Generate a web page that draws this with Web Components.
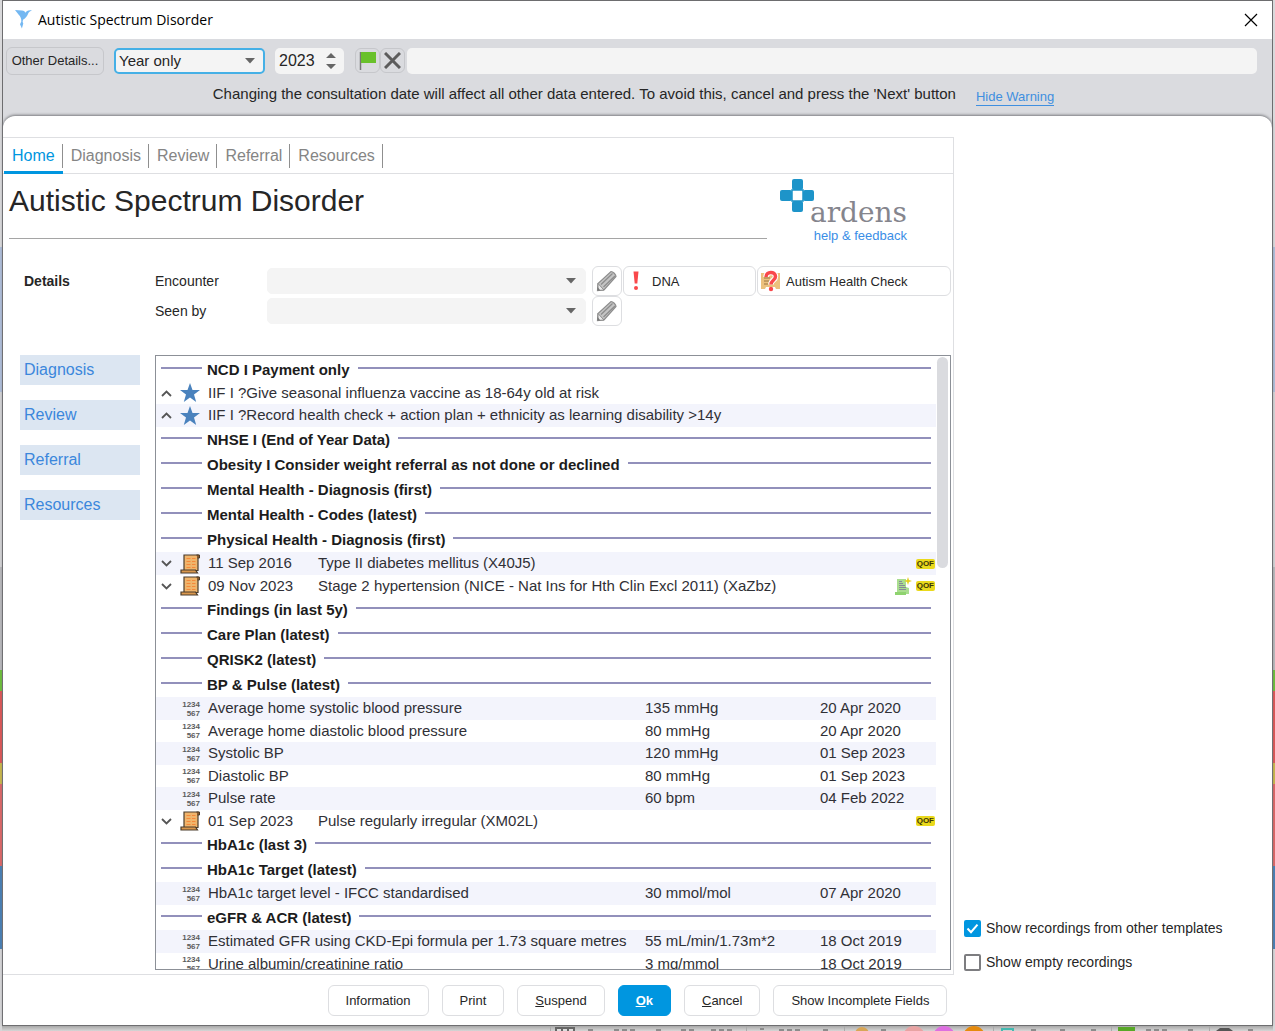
<!DOCTYPE html>
<html lang="en">
<head>
<meta charset="utf-8">
<title>Autistic Spectrum Disorder</title>
<style>
  html, body { margin: 0; height: 100%; }
  body {
    font-family: "Liberation Sans", Arial, sans-serif;
    font-size: 15px;
    color: #262626;
    background: #d0d0d2;
    overflow: hidden;
    --accent: #0096e0;
    --field: #f4f4f4;
    --line: #dedfe2;
  }
</style>
</head>
<body>
<record-app></record-app>
<script>
const define = (name, html, setup) => {
  const tpl = document.createElement('template');
  tpl.innerHTML = '<style>*{box-sizing:border-box}button,input,select{font:inherit;color:inherit;margin:0}svg{display:block;flex:none}</style>' + html;
  customElements.define(name, class extends HTMLElement {
    constructor() {
      super();
      this.attachShadow({ mode: 'open' }).append(tpl.content.cloneNode(true));
    }
    connectedCallback() { if (setup) setup(this, this.shadowRoot); }
  });
};

/* ---------- buttons ---------- */
define('ui-button', `
<style>
  :host { display: block; }
  button {
    width: 100%; height: var(--h, 30px); padding: 0 var(--px, 17px);
    display: flex; align-items: center; justify-content: var(--justify, center); gap: 6px;
    border: 1px solid var(--bd, #dddee1); border-radius: 6px; background: var(--bg, #fff);
    font-size: 13px; white-space: nowrap;
  }
  :host([primary]) button { background: var(--accent); border-color: var(--accent); color: #fff; font-weight: bold; }
</style>
<button type="button"><slot></slot></button>`, (el, root) => {
  if (el.hasAttribute('label')) root.querySelector('button').setAttribute('aria-label', el.getAttribute('label'));
});

/* ---------- drop-down ---------- */
define('ui-select', `
<style>
  :host { display: grid; align-items: center; }
  select, svg { grid-area: 1 / 1; }
  select {
    appearance: none; width: 100%; height: 26px; padding: 0 24px 0 4px;
    border: 1px solid var(--field); border-radius: 5px; background: var(--field); outline: 0;
  }
  :host([focused]) select { border: 2px solid #45b0e6; padding-left: 3px; }
  svg { justify-self: end; margin-right: 10px; pointer-events: none; }
</style>
<select><option></option></select>
<svg width="10" height="6"><path d="M0 0h10L5 5.5z" fill="#666"/></svg>`, (el, root) => {
  const s = root.querySelector('select');
  s.options[0].textContent = el.getAttribute('value') || '';
  s.setAttribute('aria-label', el.getAttribute('label'));
});

/* ---------- tick box ---------- */
define('ui-check', `
<style>
  :host { display: block; font-size: 14px; }
  label { display: flex; align-items: center; gap: 5px; height: 18px; white-space: nowrap; }
  .box { display: grid; }
  input, svg { grid-area: 1 / 1; }
  input { appearance: none; width: 17px; height: 17px; border: 2px solid #7d7d80; border-radius: 2px; background: #fff; }
  input:checked { background: var(--accent); border-color: var(--accent); }
  svg { pointer-events: none; visibility: hidden; }
  input:checked + svg { visibility: visible; }
</style>
<label><span class="box"><input type="checkbox"><svg width="17" height="17"><path d="M3.5 8.5l3.5 3.7L13.5 4.6" fill="none" stroke="#fff" stroke-width="2"/></svg></span><slot></slot></label>`,
(el, root) => { root.querySelector('input').checked = el.hasAttribute('checked'); });

/* ---------- title bar ---------- */
define('title-bar', `
<style>
  :host { display: flex; align-items: center; gap: 5px; height: 38px; padding: 0 14px 2px 10px; background: #fff; color: #000; font: 14px "Open Sans", sans-serif; }
  span { flex: 1; }
  button { border: 0; background: none; padding: 2px 0 0; }
</style>
<svg width="20" height="20" viewBox="0 0 20 20"><path d="M2 1l7 .5c2 .2 3 1.200 3.500 2.200C13.500 2 15 1 19 1.500c-1.800.5-3.500 1.500-4 3.500-.8 2-2.200 4-5 5.800l-.4 2.200.7 1.500-1.400 5-1.900-4.200 1.300-2.800c.2-3-.8-5-2.800-7z" fill="#74b8f2"/></svg>
<span>Autistic Spectrum Disorder</span>
<button type="button" aria-label="Close"><svg width="14" height="14"><path d="M1 1l12 12M13 1L1 13" stroke="#000" stroke-width="1.200"/></svg></button>`);

/* ---------- date tool bar ---------- */
define('date-toolbar', `
<style>
  :host { display: block; height: 77px; background: #dadbdf; }
  .row { display: flex; align-items: center; height: 43px; padding: 0 15px 0 3px; }
  .details { --h: 28px; --px: 4px; --bg: #dadbdf; --bd: #c6c7cb; width: 98px; }
  .sel { width: 151px; margin: 0 10px; }
  .num { display: grid; align-items: center; width: 69px; margin-right: 11px; }
  .num input, .num svg { grid-area: 1 / 1; }
  .num input { appearance: textfield; width: 100%; height: 26px; border: 0; border-radius: 5px; background: var(--field); padding: 0 4px; font-size: 16px; outline: 0; }
  .num input::-webkit-inner-spin-button { appearance: none; }
  .num svg { justify-self: end; margin-right: 8px; pointer-events: none; }
  .ico { --h: 25px; --px: 0; --bg: #dadbdf; --bd: #c6c7cb; width: 25px; }
  .note { flex: 1; height: 26px; border: 0; border-radius: 5px; background: var(--field); padding: 0 6px; min-width: 0; margin-left: 2px; }
  .warn { display: flex; align-items: center; justify-content: center; gap: 20px; height: 22px; padding-right: 8px; white-space: nowrap; }
  a { font-size: 13px; line-height: 16px; color: #3f8fe0; text-decoration: none; border-bottom: 1px solid #3f8fe0; margin-top: 8px; }
</style>
<div class="row">
  <ui-button class="details">Other Details...</ui-button>
  <ui-select class="sel" focused value="Year only" label="Date precision"></ui-select>
  <span class="num"><input type="number" value="2023" aria-label="Year"><svg width="10" height="18"><path d="M0 6h10L5 1zM0 12h10l-5 5z" fill="#666"/></svg></span>
  <ui-button class="ico" label="Flag"><svg width="17" height="20"><path d="M1.500 1v18" stroke="#777" stroke-width="1.500"/><path d="M2 1h15v11H2z" fill="#69c12b"/></svg></ui-button>
  <ui-button class="ico" label="Clear"><svg width="17" height="17"><path d="M1 1l15 15M16 1L1 16" stroke="#5c5c5c" stroke-width="3"/></svg></ui-button>
  <input class="note" type="text" aria-label="Note">
</div>
<div class="warn"><span>Changing the consultation date will affect all other data entered. To avoid this, cancel and press the 'Next' button</span><a href="#">Hide Warning</a></div>`);

/* ---------- tabs ---------- */
define('tab-strip', `
<style>
  :host { display: flex; height: 36px; border-bottom: 1px solid var(--line); padding-left: 1px; }
  nav { display: flex; }
  a { display: flex; align-items: center; font-size: 16px; color: #858585; text-decoration: none; height: 36px; padding-top: 3px; border-bottom: 3px solid transparent; }
  a span { padding: 0 7px 0 8px; line-height: 24px; border-right: 1px solid #8f8f8f; }
  a.on { color: var(--accent); border-color: var(--accent); }
</style>
<nav></nav>`, (el, root) => {
  root.querySelector('nav').innerHTML = ['Home', 'Diagnosis', 'Review', 'Referral', 'Resources']
    .map((t, i) => `<a href="#"${i ? '' : ' class="on"'}><span>${t}</span></a>`).join('');
});

/* ---------- heading and logo ---------- */
define('page-heading', `
<style>
  :host { display: flex; height: 70px; padding: 0 46px 0 6px; gap: 13px; }
  h1 { flex: 1; margin: 0; height: 65px; font-weight: normal; font-size: 30px; line-height: 54px; border-bottom: 1px solid #a5a5a5; white-space: nowrap; }
  .logo { display: grid; width: 127px; grid-template-rows: 54px 16px; justify-items: end; }
  .logo svg, .logo b { grid-area: 1 / 1; }
  .logo svg { justify-self: start; margin-top: 4px; }
  .logo b { font: 28px/30px "DejaVu Serif", serif; color: #85858d; align-self: end; }
  a { font-size: 13px; line-height: 16px; color: #3a8ee6; text-decoration: none; }
</style>
<h1>Autistic Spectrum Disorder</h1>
<div class="logo">
  <svg width="36" height="36"><g fill="#1d94c9"><rect x="12" y="1" width="11" height="11" rx="2"/><rect x="0" y="12" width="12" height="11" rx="2"/><rect x="23" y="12" width="11" height="11" rx="2"/><rect x="12" y="23" width="11" height="11" rx="2"/></g><path d="M12 12h11v11H12z" fill="none" stroke="#1d94c9" stroke-width="1.500"/></svg>
  <b>ardens</b>
  <a href="#">help &amp; feedback</a>
</div>`);

/* ---------- encounter form ---------- */
define('encounter-form', `
<style>
  :host { display: grid; grid-template-columns: 131px 112px 1fr 30px 134px 195px; grid-auto-rows: 30px; align-items: center; padding: 22px 2px 0 21px; font-size: 14px; }
  b { font-size: 14px; }
  .s { margin-right: 6px; }
  .p { --h: 30px; --px: 0; }
  .w { --h: 30px; --px: 3px; --justify: flex-start; margin-left: 1px; }
  .first { grid-column: 2; }
</style>
<b>Details</b>
<span>Encounter</span><ui-select class="s" label="Encounter"></ui-select><ui-button class="p" label="Edit encounter"><pencil-icon></pencil-icon></ui-button>
<ui-button class="w"><svg width="19" height="22"><path d="M6.500 1.500h5l-1.200 12H7.700z" fill="#f9484b"/><circle cx="9" cy="18" r="2" fill="#f9484b"/></svg>DNA</ui-button>
<ui-button class="w"><svg width="19" height="22"><path d="M0 3h4l1 2h9l1-2h4v16h-4l-1-2H5l-1 2H0z" fill="#ecc17d"/><path d="M3 8h6M3 11h6M3 14h4" stroke="#9a7443"/><path d="M5 7c0-6 9.500-6 9.500-.5 0 4-4.500 3.500-4.500 8" fill="none" stroke="#fff" stroke-width="5.500"/><path d="M5 7c0-6 9.500-6 9.500-.5 0 4-4.500 3.500-4.500 8" fill="none" stroke="#f9484b" stroke-width="3.500"/><circle cx="10" cy="19" r="2.200" fill="#f9484b"/></svg>Autism Health Check</ui-button>
<span class="first">Seen by</span><ui-select class="s" label="Seen by"></ui-select><ui-button class="p" label="Edit seen by"><pencil-icon></pencil-icon></ui-button>`);

define('pencil-icon', `
<style>:host { display: block; }</style>
<svg width="22" height="22"><path d="M1.500 20.500l.5-7L15 1.500c2 0 5 3 5 5L8 20z" fill="#c4c4c4" stroke="#8d8d8d" stroke-width="1.200"/><path d="M5 14.500L16.500 3.500M7.500 17L19 6" stroke="#8d8d8d" stroke-width="1.300"/><path d="M2 13.500l6 6.500-6 .5z" fill="#e9e9e9" stroke="#8d8d8d"/><path d="M1.500 20.500v-3.500l3 3.500z" fill="#777"/></svg>`);

/* ---------- side links ---------- */
define('side-links', `
<style>
  :host { display: flex; flex-direction: column; gap: 15px; width: 120px; flex: none; }
  a { display: block; line-height: 30px; padding-left: 4px; font-size: 16px; background: #dce6f2; color: #3b87dc; text-decoration: none; }
</style>
<a href="#">Diagnosis</a><a href="#">Review</a><a href="#">Referral</a><a href="#">Resources</a>`);

/* ---------- record list ---------- */
const UP = '<svg class="chev" width="11" height="7"><path d="M1 6l4.500-4.500L10 6" fill="none" stroke="#555" stroke-width="1.800"/></svg>';
const DOWN = '<svg class="chev" width="11" height="7"><path d="M1 1l4.500 4.500L10 1" fill="none" stroke="#555" stroke-width="1.800"/></svg>';
const STAR = '<svg width="20" height="20"><path d="M10 0l2.500 7H20l-6 4.600L16.200 19 10 14.600 3.800 19 6 11.600 0 7h7.500z" fill="#4a82bd"/></svg>';
const SCROLL = '<svg width="20" height="20"><path d="M4 1h14v15.500H4z" fill="#f0b56c" stroke="#4a3c2c" stroke-width="1.200"/><path d="M1 16h14.500l2 3H1z" fill="#d9974d" stroke="#4a3c2c" stroke-width="1.200"/><path d="M16.500 1h3v3h-2" fill="#8c5a2b" stroke="#4a3c2c"/><path d="M6.500 4.500h4M12 4.500h3.500M6.500 7.500h4M12 7.500h3.500M6.500 10.500h4M12 10.500h3.500M6.500 13.500h4M12 13.500h3.500" stroke="#f5893a"/></svg>';
const NUM = '<span class="num">1234<br>567</span>';
const QOF = '<span class="qof">QOF</span>';
const NEWDOC = '<svg width="19" height="19"><path d="M3 2h9v8l3 1v6H3z" fill="#a9dd8f"/><path d="M1 15h11v3H1z" fill="#8fd36f"/><path d="M5 4.500h3M5 6.500h4M5 8.500h6M5 10.500h7M5 12.500h7" stroke="#889"/><path d="M14 0l1 3 3 1-3 1-1 3-1-3-3-1 3-1z" fill="#e6cf1e"/></svg>';
const head = t => `<tr class="h"><th colspan="5" scope="colgroup"><div><i></i><span>${t}</span><i></i></div></th></tr>`;
const row = (chev, icon, cells) => `<tr><td><div class="ic">${chev}${icon}</div></td>${cells}</tr>`;
const alertRow = t => row(UP, STAR, `<td colspan="4">${t}</td>`);
const diag = (d, t, badges) => row(DOWN, SCROLL, `<td>${d}</td><td colspan="2">${t}</td><td><div class="bd">${badges}</div></td>`);
const value = (t, v, d) => row('', NUM, `<td colspan="2">${t}</td><td>${v}</td><td>${d}</td>`);

define('record-list', `
<style>
  :host { display: flex; flex: 1; min-width: 0; border: 1px solid #8c9097; overflow: hidden; align-items: flex-start; padding: 1px 2px 0 0; }
  table { flex: 1; min-width: 0; table-layout: fixed; border-collapse: collapse; color: #303036; }
  td, th { padding: 0; white-space: nowrap; text-align: left; font-weight: normal; }
  td + td { padding-bottom: 2px; }
  td:has(.bd) { padding: 0; }
  tr { height: 22px; }
  tr:nth-child(odd) { height: 23px; background: #f3f4fc; }
  tr.h, tr.h:nth-child(odd) { height: 25px; background: none; }
  th div { display: flex; align-items: center; gap: 8px; padding: 0 5px; }
  th span { font-weight: bold; color: #1c1c1c; }
  th i { flex: 1; height: 2px; margin-bottom: 4px; background: #9290bb; }
  th i:first-child { flex: none; width: 41px; margin-right: -3px; }
  .ic { display: grid; grid-template-columns: 11px 20px; gap: 8px; align-items: center; padding-left: 5px; height: 20px; }
  .ic > :last-child { grid-column: 2; }
  .num { font: bold 8px/9px "Liberation Sans", sans-serif; color: #5c5c5c; text-align: right; }
  .bd { display: flex; justify-content: flex-end; align-items: center; gap: 3px; padding-right: 1px; height: 20px; }
  .qof { background: #ead91c; border-radius: 2px; font: bold 8px/10px "Liberation Sans", sans-serif; padding: 0 1px; color: #3a3608; }
  .bar { flex: none; width: 11px; height: 211px; border-radius: 6px; background: #dadbdf; margin-left: 1px; }
</style>
<table>
  <colgroup><col style="width:52px"><col style="width:110px"><col><col style="width:175px"><col style="width:116px"></colgroup>
  <tbody></tbody>
</table>
<div class="bar"></div>`, (el, root) => {
  root.querySelector('tbody').innerHTML =
    head('NCD I Payment only') +
    alertRow('IIF I ?Give seasonal influenza vaccine as 18-64y old at risk') +
    alertRow('IIF I ?Record health check + action plan + ethnicity as learning disability &gt;14y') +
    head('NHSE I (End of Year Data)') +
    head('Obesity I Consider weight referral as not done or declined') +
    head('Mental Health - Diagnosis (first)') +
    head('Mental Health - Codes (latest)') +
    head('Physical Health - Diagnosis (first)') +
    diag('11 Sep 2016', 'Type II diabetes mellitus (X40J5)', QOF) +
    diag('09 Nov 2023', 'Stage 2 hypertension (NICE - Nat Ins for Hth Clin Excl 2011) (XaZbz)', NEWDOC + QOF) +
    head('Findings (in last 5y)') +
    head('Care Plan (latest)') +
    head('QRISK2 (latest)') +
    head('BP &amp; Pulse (latest)') +
    value('Average home systolic blood pressure', '135 mmHg', '20 Apr 2020') +
    value('Average home diastolic blood pressure', '80 mmHg', '20 Apr 2020') +
    value('Systolic BP', '120 mmHg', '01 Sep 2023') +
    value('Diastolic BP', '80 mmHg', '01 Sep 2023') +
    value('Pulse rate', '60 bpm', '04 Feb 2022') +
    diag('01 Sep 2023', 'Pulse regularly irregular (XM02L)', QOF) +
    head('HbA1c (last 3)') +
    head('HbA1c Target (latest)') +
    value('HbA1c target level - IFCC standardised', '30 mmol/mol', '07 Apr 2020') +
    head('eGFR &amp; ACR (latest)') +
    value('Estimated GFR using CKD-Epi formula per 1.73 square metres', '55 mL/min/1.73m*2', '18 Oct 2019') +
    value('Urine albumin/creatinine ratio', '3 mg/mmol', '18 Oct 2019');
});

/* ---------- footer ---------- */
define('action-bar', `
<style>
  :host { display: flex; justify-content: center; align-items: center; gap: 13px; height: 50px; --h: 31px; }
</style>
<ui-button>Information</ui-button>
<ui-button>Print</ui-button>
<ui-button><span><u>S</u>uspend</span></ui-button>
<ui-button primary><span><u>O</u>k</span></ui-button>
<ui-button><span><u>C</u>ancel</span></ui-button>
<ui-button>Show Incomplete Fields</ui-button>`);

/* ---------- application window behind the dialog ---------- */
define('back-edge', `
<style>
  :host { display: flex; justify-content: flex-end; height: 5px; overflow: hidden; background: linear-gradient(#a8a8a8, #d6d6d6); }
</style>
<svg width="725" height="5">
  <path d="M2.500 0v5M198.500 0v5M296.500 0v5M445.500 0v5M563.500 0v5M661.500 0v5" stroke="#aaa"/>
  <path d="M7 1h20v4H7z" fill="#666"/><path d="M9 3h4v2H9zM15 3h4v2h-4zM21 3h4v2h-4z" fill="#ddd"/>
  <path d="M40 4h5M66 4h24M108 4h6M133 4h14M163 4h24M212 3h4M231 4h24M275 4h5M333 4h5M483 4h5M512 4h5M543 4h5M598 4h22M640 4h5M700 4h5" stroke="#8c8c8c" stroke-width="2" stroke-dasharray="5 3"/>
  <circle cx="314" cy="8" r="7" fill="#d8a657"/><circle cx="366" cy="11" r="11" fill="#e8a3a3"/><circle cx="396" cy="11" r="11" fill="#dd6fe0"/><circle cx="426" cy="11" r="11" fill="#e58a0d"/>
  <path d="M454 5V3h11v2" fill="none" stroke="#43b9b0" stroke-width="2"/>
  <path d="M570 1h17v4h-17z" fill="#58a827"/><path d="M668 5l4-3h9l4 3z" fill="#555"/>
</svg>`);

define('record-app', `
<style>
  :host { display: flex; flex-direction: column; height: 100vh; padding: 0 2px; background: linear-gradient(#d9d9db 0 24%, #aebdd9 24% 38%, #d2d2d4 38% 55%, #b8b8bb 55% 65%, #6cbf3a 65% 67%, #d55 67% 74%, #c9b64a 74% 76%, #d66 76% 84%, #477fb5 84% 92%, #d6d6d8 92%); }
  .win { flex: 1; min-height: 0; display: flex; flex-direction: column; border: 1px solid #6d6d6f; background: #dadbdf; }
  .body { flex: 1; min-height: 0; display: flex; flex-direction: column; background: #fff; border-radius: 12px 12px 0 0; box-shadow: 0 -1px 3px #77787c; padding-top: 21px; }
  .cols { flex: 1; min-height: 0; display: flex; }
  .panel { flex: 1; min-width: 0; display: flex; flex-direction: column; border: 1px solid var(--line); border-left: 0; }
  .low { flex: 1; min-height: 0; display: flex; gap: 15px; padding: 29px 2px 4px 17px; }
  aside { width: 318px; flex: none; display: flex; flex-direction: column; justify-content: flex-end; gap: 16px; padding: 0 10px 4px; }
</style>
<div class="win">
  <title-bar></title-bar>
  <date-toolbar></date-toolbar>
  <div class="body">
    <div class="cols">
      <main class="panel">
        <tab-strip></tab-strip>
        <page-heading></page-heading>
        <encounter-form></encounter-form>
        <div class="low"><side-links></side-links><record-list></record-list></div>
      </main>
      <aside><ui-check checked>Show recordings from other templates</ui-check><ui-check>Show empty recordings</ui-check></aside>
    </div>
    <action-bar></action-bar>
  </div>
</div>
<back-edge></back-edge>`);
</script>
</body>
</html>
